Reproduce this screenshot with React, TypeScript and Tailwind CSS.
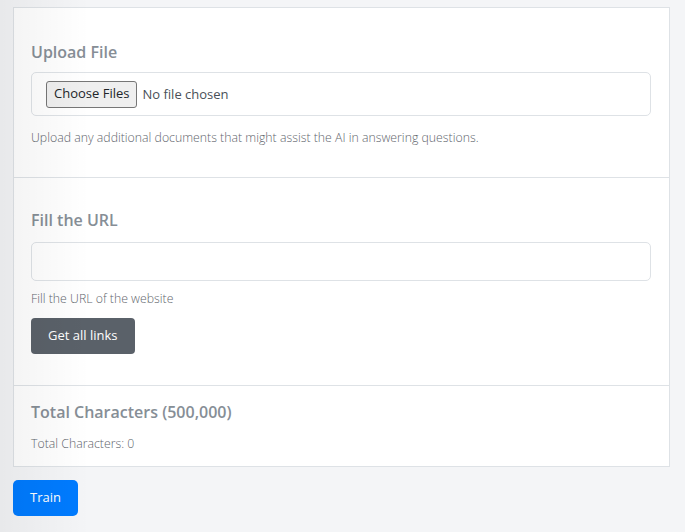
export default function App() {
  return (
    <div
      className="relative min-h-screen w-full bg-[#f4f5f7] px-[13px] pt-[7px] text-[#6c757d]"
      style={{ fontFamily: '"Open Sans", "Noto Sans", sans-serif' }}
    >
      {/* soft shadow cast from the left edge */}
      <div className="pointer-events-none absolute inset-y-0 left-0 w-[90px] bg-gradient-to-r from-black/[0.05] to-transparent" />

      <div className="w-[657px] border border-[#dee2e6] bg-white">
        {/* Upload File */}
        <div className="pt-[34px] pr-[18px] pb-[30px] pl-[17px]">
          <h3 className="mb-[10px] text-[16px] leading-[20px] font-semibold text-[#868e96]">Upload File</h3>
          <div className="flex h-[44px] items-center rounded-[5px] border border-[#dee2e6] px-[14px]">
            <input
              type="file"
              multiple
              className="text-[13px] text-[#495057] file:mr-[5px] file:h-[27px] file:rounded-[3px] file:border file:border-[#767676] file:bg-[#efefef] file:px-[7px] file:text-[13px] file:text-[#212529]"
            />
          </div>
          <p className="mt-[13px] text-[12.3px] leading-[18px] font-light text-[#5f666d]">
            Upload any additional documents that might assist the AI in answering questions.
          </p>
        </div>

        {/* Fill the URL */}
        <div className="border-t border-[#dee2e6] pt-[32px] pr-[18px] pb-[31px] pl-[17px]">
          <h3 className="mb-[12px] text-[16px] leading-[20px] font-semibold text-[#868e96]">Fill the URL</h3>
          <input
            type="text"
            className="block h-[39px] w-full rounded-[5px] border border-[#dee2e6] px-3 text-[14px] outline-none"
          />
          <p className="mt-[9px] text-[12.3px] leading-[18px] font-light text-[#5f666d]">Fill the URL of the website</p>
          <button className="mt-[10px] h-[36px] rounded-[4px] bg-[#5a6169] px-[17px] text-[13px] text-white">
            Get all links
          </button>
        </div>

        {/* Total Characters */}
        <div className="border-t border-[#dee2e6] pt-[16px] pr-[18px] pb-[13px] pl-[17px]">
          <h3 className="mb-[13px] text-[16px] leading-[20px] font-semibold text-[#868e96]">
            Total Characters (500,000)
          </h3>
          <p className="text-[12.3px] leading-[18px] font-light text-[#5f666d]">Total Characters: 0</p>
        </div>
      </div>

      <button className="mt-[13px] h-[36px] w-[65px] rounded-[5px] bg-[#007bff] text-[13px] text-white">Train</button>
    </div>
  )
}
